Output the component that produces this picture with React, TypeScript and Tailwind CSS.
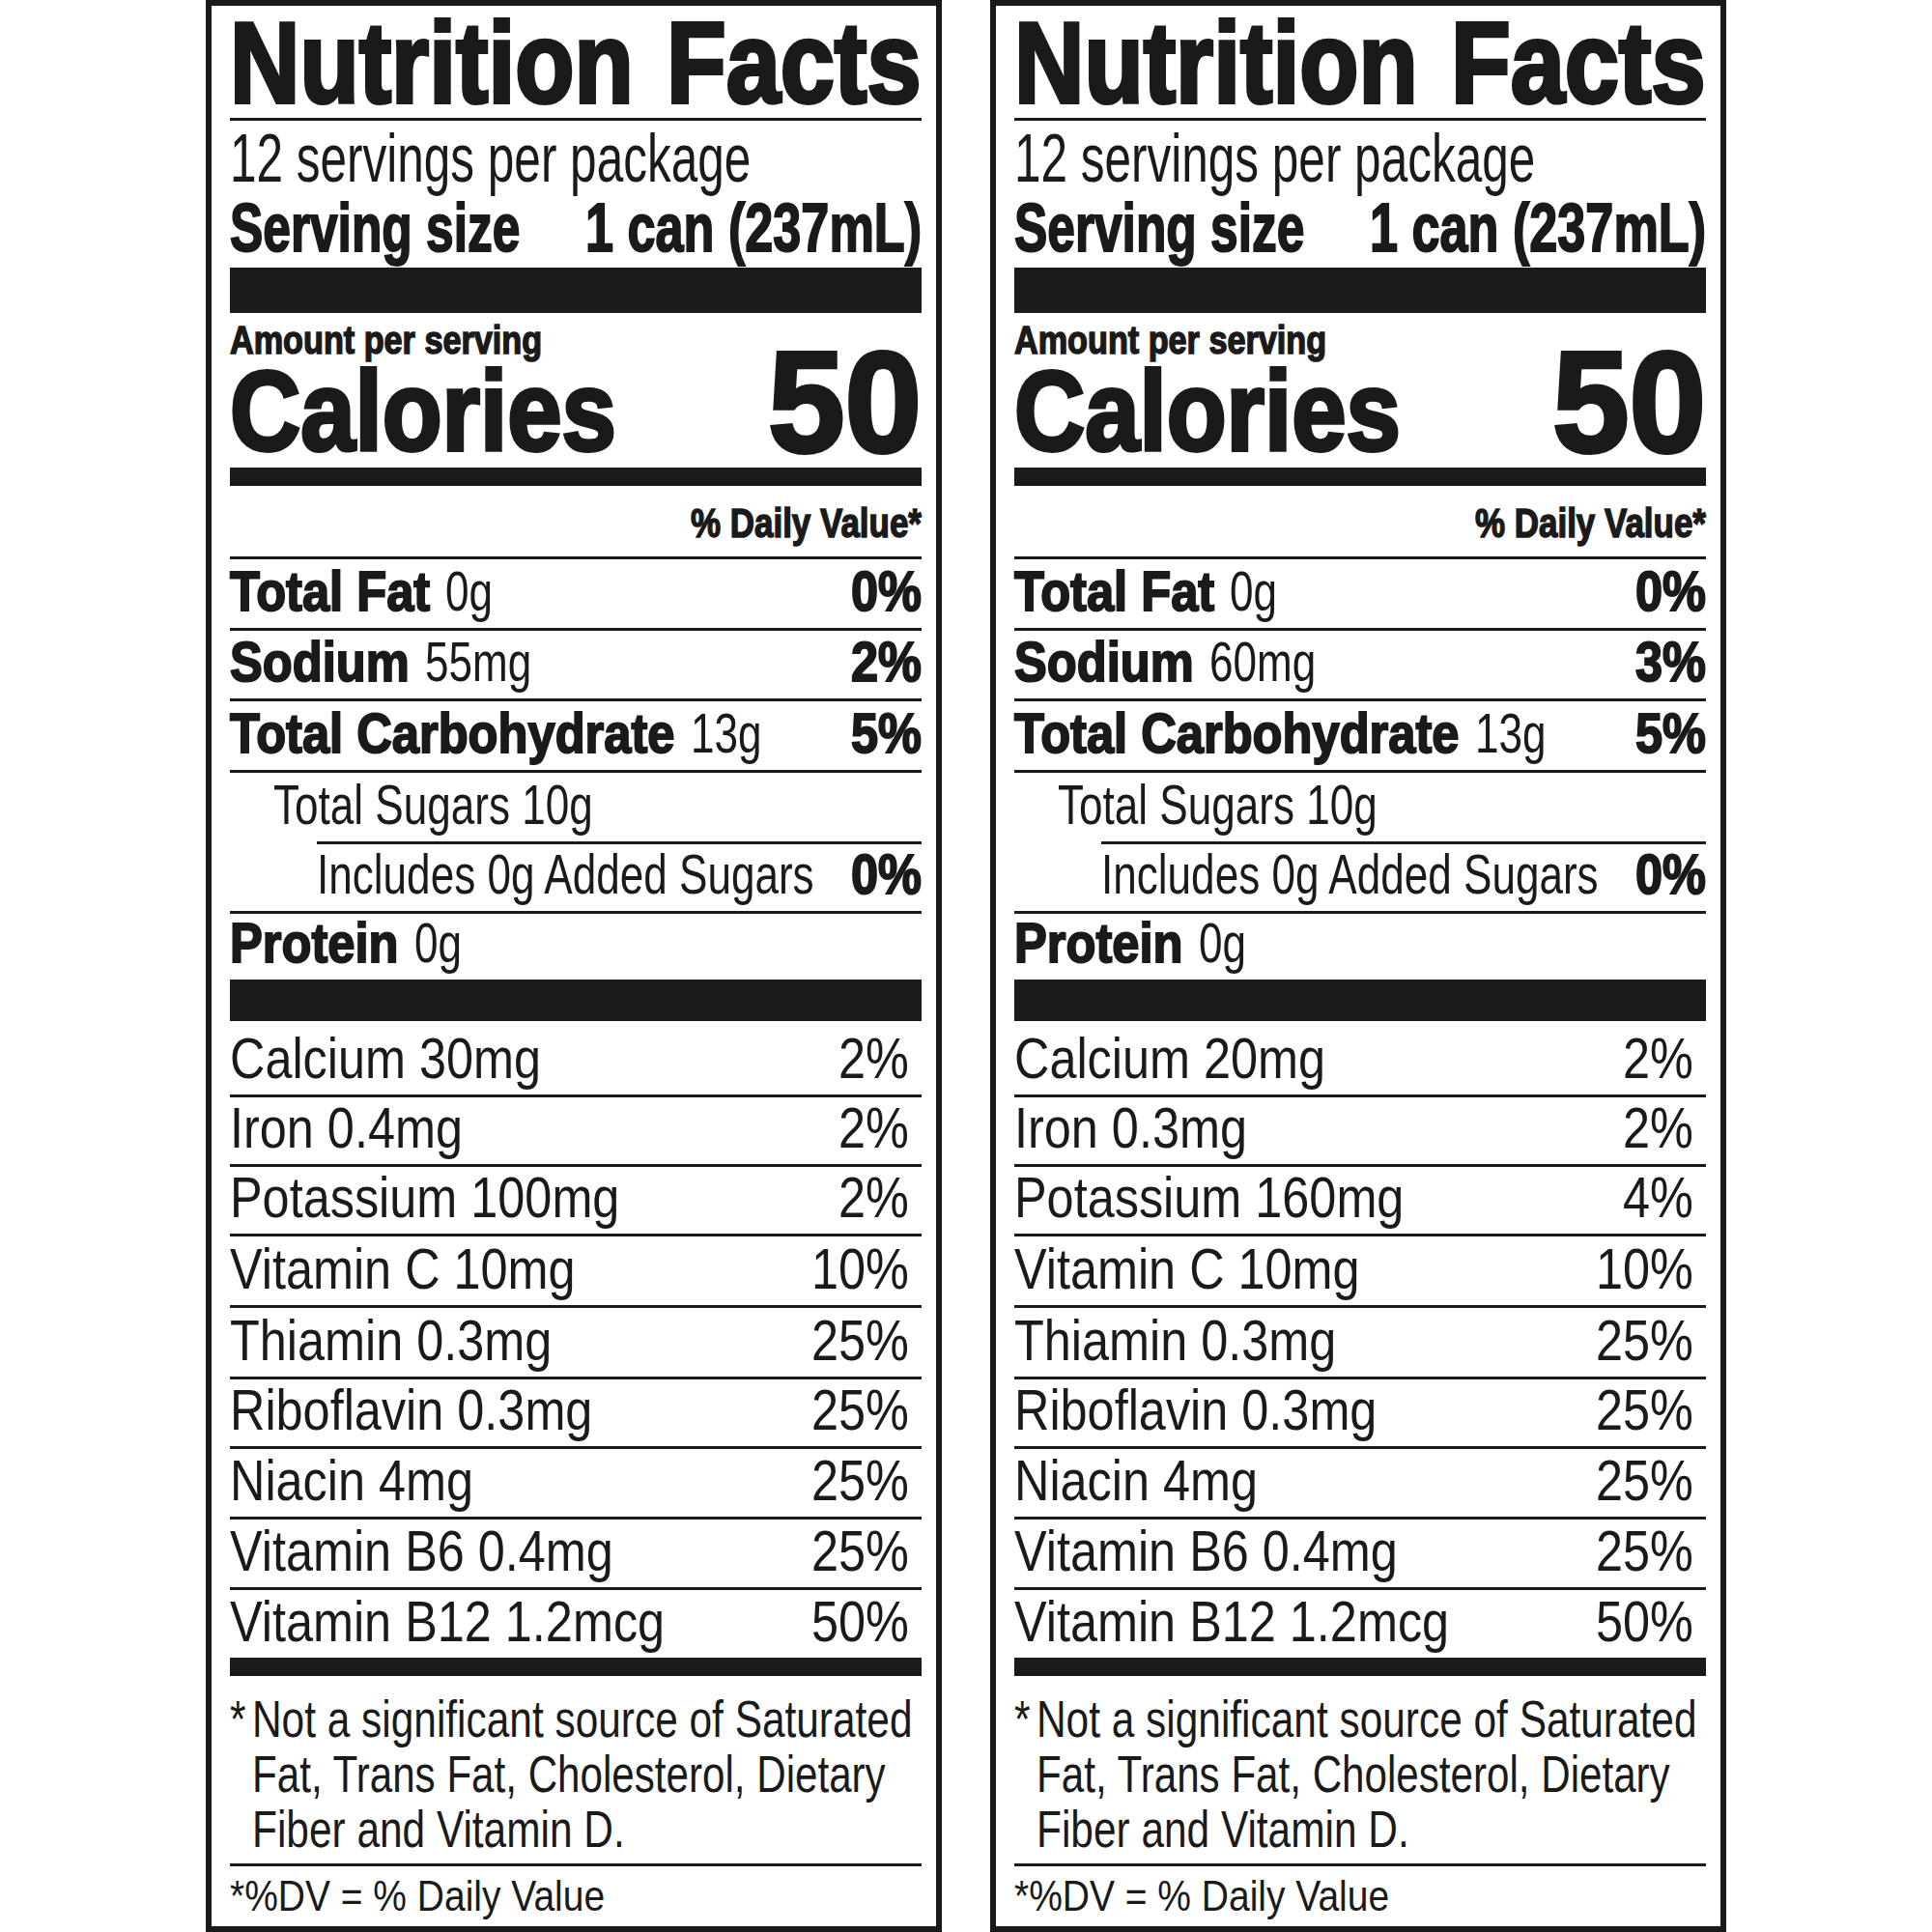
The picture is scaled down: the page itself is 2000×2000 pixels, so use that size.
import React, { useLayoutEffect, useRef, useState } from 'react';

type Vitamin = [string, string];

interface LabelData {
    sodium: string;
    sodiumDv: string;
    vitamins: Vitamin[];
}

const tail: Vitamin[] = [
    ['Vitamin C 10mg', '10%'],
    ['Thiamin 0.3mg', '25%'],
    ['Riboflavin 0.3mg', '25%'],
    ['Niacin 4mg', '25%'],
    ['Vitamin B6 0.4mg', '25%'],
    ['Vitamin B12 1.2mcg', '50%'],
];

const labels: LabelData[] = [
    {
        sodium: '55mg',
        sodiumDv: '2%',
        vitamins: [['Calcium 30mg', '2%'], ['Iron 0.4mg', '2%'], ['Potassium 100mg', '2%'], ...tail],
    },
    {
        sodium: '60mg',
        sodiumDv: '3%',
        vitamins: [['Calcium 20mg', '2%'], ['Iron 0.3mg', '2%'], ['Potassium 160mg', '4%'], ...tail],
    },
];

// row heights measured off the printed label (rule to rule)
const vitaminRowH = ['h-[76px]', 'h-[69px]', 'h-[69px]', 'h-[71px]', 'h-[71px]', 'h-[69px]', 'h-[70px]', 'h-[70px]', 'h-[70px]'];

// No condensed face is installed, so squeeze Liberation Sans horizontally.
// The outer span takes the squeezed width so flex/justify still lines up.
const Cond: React.FC<{ className: string; children: React.ReactNode }> = ({ className, children }) => {
    const ref = useRef<HTMLSpanElement>(null);
    const [w, setW] = useState<number | undefined>(undefined);
    useLayoutEffect(() => {
        if (ref.current) setW(ref.current.getBoundingClientRect().width);
    }, []);
    return (
        <span className="inline-block whitespace-nowrap" style={{ width: w }}>
            <span ref={ref} className={`inline-block origin-left whitespace-nowrap ${className}`}>
                {children}
            </span>
        </span>
    );
};

const Rule = ({ className = '' }: { className?: string }) => <div className={`h-[3px] shrink-0 bg-[#1a1a1a] ${className}`} />;

interface NutrientRowProps {
    height: string;
    label?: string;
    amount: string;
    dv?: string;
    indent?: string;
}

const NutrientRow: React.FC<NutrientRowProps> = ({ height, label, amount, dv, indent = '' }) => (
    <div className={`flex shrink-0 items-end justify-between ${height} pb-[9px] text-[58px] leading-none whitespace-nowrap`}>
        <div className={indent}>
            {label && (
                <>
                    <Cond className="scale-x-[0.873] font-bold [-webkit-text-stroke:2px_#1a1a1a]">{label}</Cond>{' '}
                </>
            )}
            <Cond className="scale-x-[0.76]">{amount}</Cond>
        </div>
        {dv && <Cond className="scale-x-[0.87] font-bold [-webkit-text-stroke:2px_#1a1a1a]">{dv}</Cond>}
    </div>
);

const NutritionLabel: React.FC<{ data: LabelData }> = ({ data }) => (
    <div className="flex h-[2000px] w-[762px] flex-col border-[6px] border-[#1a1a1a] pl-[19px] pr-[15px] font-['Liberation_Sans',Arial,sans-serif] text-[#1a1a1a]">
        <div className="flex h-[116px] shrink-0 justify-between text-[118px] font-bold leading-none">
            <Cond className="scale-x-[0.85] [-webkit-text-stroke:4px_#1a1a1a]">Nutrition</Cond>
            <Cond className="scale-x-[0.855] [-webkit-text-stroke:4px_#1a1a1a]">Facts</Cond>
        </div>
        <Rule />
        <div className="h-[72px] shrink-0 pt-[4px] text-[70px] leading-none">
            <Cond className="scale-x-[0.707]">12 servings per package</Cond>
        </div>
        <div className="flex h-[80px] shrink-0 justify-between pt-[3px] text-[71px] font-bold leading-none">
            <Cond className="scale-x-[0.725] [-webkit-text-stroke:2px_#1a1a1a]">Serving size</Cond>
            <Cond className="scale-x-[0.735] [-webkit-text-stroke:2px_#1a1a1a]">1 can (237mL)</Cond>
        </div>
        <div className="h-[47px] shrink-0 bg-[#1a1a1a]" />
        <div className="flex h-[160px] shrink-0 items-end justify-between">
            <div className="flex h-full flex-col justify-between font-bold">
                <div className="pt-[11px] text-[40px] leading-[34px]">
                    <Cond className="scale-x-[0.855] [-webkit-text-stroke:1.5px_#1a1a1a]">Amount per serving</Cond>
                </div>
                <div className="pb-[3px] text-[117px] leading-[110px]">
                    <Cond className="scale-x-[0.866] [-webkit-text-stroke:4px_#1a1a1a]">Calories</Cond>
                </div>
            </div>
            <div className="-mb-[7px] text-[149px] font-bold leading-none">
                <Cond className="scale-x-[0.96] [-webkit-text-stroke:4px_#1a1a1a]">50</Cond>
            </div>
        </div>
        <div className="h-[19px] shrink-0 bg-[#1a1a1a]" />
        <div className="flex h-[73px] shrink-0 justify-end pt-[18px] text-[42px] font-bold leading-none">
            <Cond className="scale-x-[0.832] [-webkit-text-stroke:1.5px_#1a1a1a]">% Daily Value*</Cond>
        </div>
        <Rule />
        <NutrientRow height="h-[71px]" label="Total Fat" amount="0g" dv="0%" />
        <Rule />
        <NutrientRow height="h-[70px]" label="Sodium" amount={data.sodium} dv={data.sodiumDv} />
        <Rule />
        <NutrientRow height="h-[71px]" label="Total Carbohydrate" amount="13g" dv="5%" />
        <Rule />
        <NutrientRow height="h-[71px]" amount="Total Sugars 10g" indent="pl-[45px]" />
        <Rule className="ml-[90px]" />
        <NutrientRow height="h-[69px]" amount="Includes 0g Added Sugars" dv="0%" indent="pl-[90px]" />
        <Rule />
        <NutrientRow height="h-[68px]" label="Protein" amount="0g" />
        <div className="h-[43px] shrink-0 bg-[#1a1a1a]" />
        {data.vitamins.map(([name, dv], i) => (
            <React.Fragment key={name}>
                {i > 0 && <Rule />}
                <div className={`flex shrink-0 items-end justify-between ${vitaminRowH[i]} pb-[7px] pr-[13px] text-[60px] leading-none`}>
                    <Cond className="scale-x-[0.84]">{name}</Cond>
                    <Cond className="scale-x-[0.84]">{dv}</Cond>
                </div>
            </React.Fragment>
        ))}
        <div className="h-[19px] shrink-0 bg-[#1a1a1a]" />
        <div className="flex h-[194px] shrink-0 pt-[16px] text-[53px] leading-[57px]">
            <span className="w-[23px] shrink-0">
                <Cond className="scale-x-[0.8]">*</Cond>
            </span>
            <div>
                <div>
                    <Cond className="scale-x-[0.8]">Not a significant source of Saturated</Cond>
                </div>
                <div>
                    <Cond className="scale-x-[0.795]">Fat, Trans Fat, Cholesterol, Dietary</Cond>
                </div>
                <div>
                    <Cond className="scale-x-[0.8]">Fiber and Vitamin D.</Cond>
                </div>
            </div>
        </div>
        <Rule />
        <div className="flex-1 pt-[8px] text-[45px] leading-none">
            <Cond className="scale-x-[0.866]">*%DV = % Daily Value</Cond>
        </div>
    </div>
);

const App: React.FC = () => (
    <div className="flex h-[2000px] w-[2000px] justify-center gap-[50px] overflow-hidden bg-white">
        {labels.map((d, i) => (
            <NutritionLabel key={i} data={d} />
        ))}
    </div>
);

export default App;
